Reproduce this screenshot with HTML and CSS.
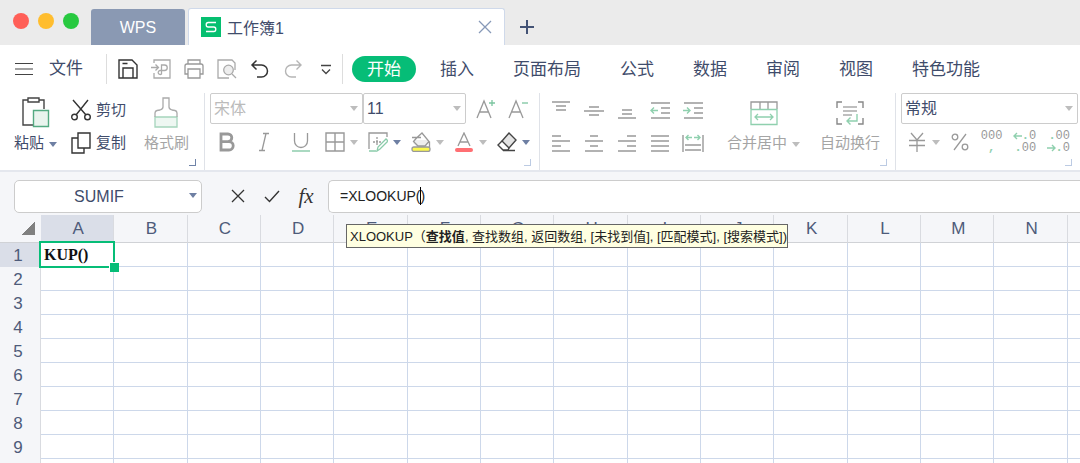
FILE: index.html
```
<!DOCTYPE html>
<html lang="zh-CN">

<head>
  <meta charset="UTF-8">
  <meta name="viewport" content="width=device-width, initial-scale=1.0">
  <title>工作簿1</title>
  <link rel="stylesheet" href="styles.css">
</head>

<body>
  <!-- 标题栏 -->
  <header class="titlebar">
    <div class="lights">
      <button class="light red" aria-label="关闭窗口"></button>
      <button class="light yellow" aria-label="最小化"></button>
      <button class="light green" aria-label="最大化"></button>
    </div>
    <button class="tab-home">WPS</button>
    <div class="tab-file">
      <svg class="logo" width="20" height="20" viewBox="0 0 20 20">
        <rect width="20" height="20" fill="#05bf70" />
        <path d="M15 5.500H7.200Q5.200 5.500 5.200 7.700T7.200 10h5.600q2 0 2 2.200t-2 2.300H5" fill="none" stroke="#fff" stroke-width="1.300" />
      </svg>
      <span class="tab-name">工作簿1</span>
      <button class="tab-close" aria-label="关闭">
        <svg width="14" height="14" viewBox="0 0 14 14"><path d="M1 1l12 12M13 1L1 13" stroke="#8799b8" stroke-width="1.300" /></svg>
      </button>
    </div>
    <button class="tab-add" aria-label="新建">
      <svg width="16" height="16" viewBox="0 0 16 16"><path d="M8 1v14M1 8h14" stroke="#435375" stroke-width="2" /></svg>
    </button>
  </header>

  <!-- 菜单栏 -->
  <nav class="menubar">
    <button class="menu-file">
      <svg width="18" height="14" viewBox="0 0 18 14"><path d="M0 1.500h18M0 7h18M0 12.500h18" stroke="#444" stroke-width="1.200" /></svg>
      <span>文件</span>
    </button>
    <div class="quick">
      <button aria-label="保存">
        <svg width="20" height="20" viewBox="0 0 20 20" fill="none" stroke="#333" stroke-width="1.400"><path d="M1 1h13l5 5v13H1zM5 19V9h10v10M4.500 4.500h5" /></svg>
      </button>
      <button aria-label="输出为PDF">
        <svg width="20" height="20" viewBox="0 0 20 20" fill="none" stroke="#aaa" stroke-width="1.300"><path d="M3 4V1h16v18H3v-5M0 8.500h7M4.500 5.500l3 3-3 3M10.500 13V6h3a2.700 2.700 0 0 1 0 5.500H9a2 2 0 1 0 1.500 3.500z" /></svg>
      </button>
      <button aria-label="打印">
        <svg width="20" height="20" viewBox="0 0 20 20" fill="none" stroke="#999" stroke-width="1.300"><path d="M4 5V1h12v4M4 15H1V7q0-2 2-2h14q2 0 2 2v8h-3M4 10h12v9H4z" /></svg>
      </button>
      <button aria-label="打印预览">
        <svg width="20" height="20" viewBox="0 0 20 20" fill="none" stroke="#aaa" stroke-width="1.300"><path d="M12 19H1V1h14l3 3v7" /><circle cx="11.500" cy="11" r="4.800" fill="#eee" /><path d="M15 15l4 4" /></svg>
      </button>
      <button aria-label="撤销">
        <svg width="20" height="20" viewBox="0 0 20 20" fill="none" stroke="#333" stroke-width="1.500"><path d="M6.500 1.500l-4.500 4.500 4.500 4.500M2 6h9.500a6 6 0 0 1 0 12H7" /></svg>
      </button>
      <button aria-label="恢复">
        <svg width="20" height="20" viewBox="0 0 20 20" fill="none" stroke="#b5b5b5" stroke-width="1.400"><path d="M13.500 1.500l4.500 4.500-4.500 4.500M18 6H8.500a6 6 0 0 0 0 12H13" /></svg>
      </button>
      <button aria-label="更多">
        <svg width="20" height="20" viewBox="0 0 20 20" fill="none" stroke="#444" stroke-width="1.300"><path d="M5 6.500h10M6 10.500l4 4 4-4" /></svg>
      </button>
    </div>
    <div class="menus">
      <a href="#" class="menu active">开始</a>
      <a href="#" class="menu">插入</a>
      <a href="#" class="menu">页面布局</a>
      <a href="#" class="menu">公式</a>
      <a href="#" class="menu">数据</a>
      <a href="#" class="menu">审阅</a>
      <a href="#" class="menu">视图</a>
      <a href="#" class="menu">特色功能</a>
    </div>
  </nav>

  <!-- 功能区 -->
  <section class="ribbon">
    <div class="group clipboard dark-corner">
      <button class="big">
        <svg width="28" height="32" viewBox="0 0 28 32" fill="none" stroke="#444" stroke-width="1.400"><path d="M6 3H1v25h10M17 3h5v9M6 1h11v4H6z" /><path d="M11.500 13.500h15v16h-15z" fill="#e9f4ee" stroke="#54aa82" /></svg>
        <span>粘贴<i class="arrow on"></i></span>
      </button>
      <div class="stack">
        <button class="small">
          <svg width="20" height="22" viewBox="0 0 20 22" fill="none" stroke="#333" stroke-width="1.400"><path d="M2 1l13 15M17 1L5 16" /><circle cx="3.500" cy="18" r="2.800" /><circle cx="16.500" cy="18" r="2.800" /></svg>
          <span>剪切</span>
        </button>
        <button class="small">
          <svg width="20" height="22" viewBox="0 0 20 22" fill="none" stroke="#333" stroke-width="1.400"><path d="M7 1h12v15H7zM7 6H1v15h12v-5" /></svg>
          <span>复制</span>
        </button>
      </div>
      <button class="big off">
        <svg width="28" height="32" viewBox="0 0 28 32" fill="none" stroke="#aaa" stroke-width="1.300"><path d="M3 20h22v10H3z" fill="#eef7f2" stroke="#a5d5bc" /><path d="M3 20v-4q0-2 2-2.500l3-.5q3-1 3-3V1h6v9q0 2 3 3l3 .5q2 .500 2 2.500v4" /></svg>
        <span>格式刷</span>
      </button>
    </div>

    <div class="group font">
      <div class="line">
        <div class="drop family off"><select aria-label="字体"><option>宋体</option></select></div>
        <div class="drop size"><select aria-label="字号"><option>11</option></select></div>
        <button class="tool grow" aria-label="增大字号">
          <svg width="22" height="22" viewBox="0 0 22 22" fill="none" stroke="#999" stroke-width="1.300"><path d="M2 20L9 3l7 17M4.500 14h9" /><path d="M14 5h6M17 2v6" stroke="#7cc5a0" /></svg>
        </button>
        <button class="tool grow" aria-label="减小字号">
          <svg width="22" height="22" viewBox="0 0 22 22" fill="none" stroke="#999" stroke-width="1.300"><path d="M2 20L9 3l7 17M4.500 14h9" /><path d="M15 5h6" stroke="#7cc5a0" /></svg>
        </button>
      </div>
      <div class="line spread">
        <button class="tool narrow" aria-label="加粗">
          <svg width="20" height="20" viewBox="0 0 20 20" fill="none" stroke="#999" stroke-width="2.800"><path d="M4 2h7a3.800 3.800 0 0 1 0 7.600H4zM4 9.600h8a4.200 4.200 0 0 1 0 8.400H4z" /></svg>
        </button>
        <button class="tool narrow" aria-label="倾斜">
          <svg width="20" height="20" viewBox="0 0 20 20" fill="none" stroke="#999" stroke-width="1.300"><path d="M9 1.500h6M5 18.500h6M12 1.500l-4 17" /></svg>
        </button>
        <button class="tool narrow" aria-label="下划线">
          <svg width="20" height="20" viewBox="0 0 20 20" fill="none" stroke="#999" stroke-width="1.300"><path d="M3.500 1v8a6.500 6.500 0 0 0 13 0V1" /><path d="M1 19h18" stroke="#7cc5a0" /></svg>
        </button>
        <button class="tool" aria-label="边框">
          <svg width="20" height="20" viewBox="0 0 20 20" fill="none" stroke="#999" stroke-width="1.400"><path d="M1 1h18v18H1zM10 1v18M1 10h18" /></svg><i class="arrow"></i>
        </button>
        <button class="tool" aria-label="绘制边框">
          <svg width="20" height="20" viewBox="0 0 20 20" fill="none" stroke="#999" stroke-width="1.300"><path d="M1 17V1h18v4" /><path d="M5 10h8M9 5v9" stroke-dasharray="2 1" /><path d="M1 19h7M9 19l1-4 8-8 2 2-8 8z" stroke="#8bcbaa" /></svg><i class="arrow on"></i>
        </button>
        <button class="tool" aria-label="填充颜色">
          <svg width="20" height="20" viewBox="0 0 20 20" fill="none" stroke="#999" stroke-width="1.300"><path d="M4 8h13l1 2-4 5H6l-4-4z" fill="#eee" stroke="none" /><path d="M1 5.500h9M6 5.500L2.500 9.500 7 14h7l4-4.500L11 1 6 5.500M18.500 9.500V15" /><rect x="1" y="15" width="18" height="4.500" rx="2" fill="#fbf94f" /></svg><i class="arrow"></i>
        </button>
        <button class="tool" aria-label="字体颜色">
          <svg width="20" height="20" viewBox="0 0 20 20" fill="none" stroke="#999" stroke-width="1.300"><path d="M4 14l6-13 6 13M6 10h8" /><rect x="1" y="16" width="18" height="4" rx="2" fill="#ff6f73" stroke="none" /></svg><i class="arrow"></i>
        </button>
        <button class="tool" aria-label="清除">
          <svg width="20" height="20" viewBox="0 0 20 20" fill="none" stroke="#444" stroke-width="1.400"><path d="M12 1l7 7-7 8-7-7z" fill="#e4e4e4" /><path d="M5 9l-4 4 5 5h5l1-2M6 18.500h12" /></svg><i class="arrow on"></i>
        </button>
      </div>
    </div>

    <div class="group align">
      <div class="icons">
        <button aria-label="顶端对齐"><svg width="20" height="20" viewBox="0 0 20 20" stroke="#999" stroke-width="1.400"><path d="M1 2h18M5 6h10M5 10h10" /></svg></button>
        <button aria-label="垂直居中"><svg width="20" height="20" viewBox="0 0 20 20" stroke="#999" stroke-width="1.400"><path d="M5 7h10M0 11h20M5 15h10" /></svg></button>
        <button aria-label="底端对齐"><svg width="20" height="20" viewBox="0 0 20 20" stroke="#999" stroke-width="1.400"><path d="M5 10h10M5 14h10M1 18h18" /></svg></button>
        <button aria-label="减少缩进"><svg width="20" height="20" viewBox="0 0 20 20" fill="none" stroke="#999" stroke-width="1.400"><path d="M1 3h19M11 8h9M11 13h9M1 18h19" /><path d="M8 10.500H1M4 7.500l-3 3 3 3" stroke="#8fd0ae" /></svg></button>
        <button aria-label="增加缩进"><svg width="20" height="20" viewBox="0 0 20 20" fill="none" stroke="#999" stroke-width="1.400"><path d="M1 3h19M11 8h9M11 13h9M1 18h19" /><path d="M0 10.500h7M4 7.500l3 3-3 3" stroke="#8fd0ae" /></svg></button>
        <button aria-label="左对齐"><svg width="20" height="20" viewBox="0 0 20 20" stroke="#999" stroke-width="1.400"><path d="M1 3h9M1 8h18M1 13h9M1 18h18" /></svg></button>
        <button aria-label="水平居中"><svg width="20" height="20" viewBox="0 0 20 20" stroke="#999" stroke-width="1.400"><path d="M6 3h8M1 8h18M6 13h8M1 18h18" /></svg></button>
        <button aria-label="右对齐"><svg width="20" height="20" viewBox="0 0 20 20" stroke="#999" stroke-width="1.400"><path d="M10 3h9M1 8h18M10 13h9M1 18h18" /></svg></button>
        <button aria-label="两端对齐"><svg width="20" height="20" viewBox="0 0 20 20" stroke="#999" stroke-width="1.400"><path d="M1 3h18M1 8h18M1 13h18M1 18h18" /></svg></button>
        <button aria-label="分散对齐"><svg width="22" height="20" viewBox="0 0 22 20" fill="none" stroke="#999" stroke-width="1.400"><path d="M1 2v17M21 2v17M3 12h16M3 17h16" /><path d="M10 4.500H4M6.500 2L4 4.500 6.500 7M12 4.500h6M15.500 2L18 4.500 15.500 7" stroke="#8fd0ae" /></svg></button>
      </div>
      <button class="big off">
        <svg width="28" height="32" viewBox="0 0 28 32" fill="none" stroke="#999" stroke-width="1.300"><path d="M1 12V5h26v7M10 5v7M18 5v7" /><path d="M1 12.500h26v15H1zM5 20h18M8 17l-3 3 3 3M20 17l3 3-3 3" stroke="#8fd0ae" /></svg>
        <span>合并居中<i class="arrow"></i></span>
      </button>
      <button class="big off">
        <svg width="28" height="32" viewBox="0 0 28 32" fill="none" stroke="#888" stroke-width="1.400"><path d="M6 5H1v6M22 5h5v6M6 27H1v-6M22 27h5v-6" /><path d="M7 10h14M7 14h14M7 18h9" stroke="#aaa" /><path d="M21 17v7H11M14.500 20.500L11 24l3.500 3.500" stroke="#8fd0ae" /></svg>
        <span>自动换行</span>
      </button>
    </div>

    <div class="group number">
      <div class="drop format"><select aria-label="数字格式"><option>常规</option></select></div>
      <div class="line">
        <button class="tool" aria-label="货币">
          <svg width="20" height="20" viewBox="0 0 20 20" fill="none" stroke="#999" stroke-width="1.300"><path d="M4 1l6 7 6-7M2 8.500h16M2 13.500h16M10 8v12" /></svg><i class="arrow"></i>
        </button>
        <button class="tool" aria-label="百分比">
          <svg width="20" height="20" viewBox="0 0 20 20" fill="none" stroke="#999" stroke-width="1.300"><circle cx="5" cy="5" r="2.800" /><circle cx="15" cy="15" r="2.800" /><path d="M16 2L4 18" /></svg>
        </button>
        <button class="digits"><span>000</span><span class="mint">,</span></button>
        <button class="digits right">
          <span><svg width="9" height="8" viewBox="0 0 9 8"><path d="M9 4H1M4 1L1 4l3 3" /></svg><b class="mint">.</b>0</span>
          <span><b class="mint">.</b>00</span>
        </button>
        <button class="digits right">
          <span><b class="mint">.</b>00</span>
          <span><svg width="9" height="8" viewBox="0 0 9 8"><path d="M0 4h8M5 1l3 3-3 3" /></svg><b class="mint">.</b>0</span>
        </button>
      </div>
    </div>
  </section>

  <!-- 编辑栏 -->
  <section class="formula">
    <div class="drop name-box"><select aria-label="名称框"><option>SUMIF</option></select></div>
    <div class="actions">
      <button aria-label="取消"><svg width="16" height="16" viewBox="0 0 16 16"><path d="M2 2l12 12M14 2L2 14" stroke="#333" stroke-width="1.300" /></svg></button>
      <button aria-label="输入"><svg width="16" height="16" viewBox="0 0 16 16" fill="none"><path d="M1 9l4.500 4.500L15 3" stroke="#333" stroke-width="1.400" /></svg></button>
      <button class="fx" aria-label="插入函数">fx</button>
    </div>
    <div class="input-wrap">
      <input type="text" class="input" aria-label="编辑栏" value="=XLOOKUP()">
      <span class="caret"></span>
      <div class="tip">XLOOKUP（<b>查找值</b>, 查找数组, 返回数组, [未找到值], [匹配模式], [搜索模式])</div>
    </div>
  </section>

  <!-- 表格 -->
  <table class="sheet">
    <colgroup>
      <col class="col-head">
      <col span="14">
      <col class="col-rest">
    </colgroup>
    <thead>
      <tr>
        <th class="all"></th>
        <th class="current">A</th><th>B</th><th>C</th><th>D</th><th>E</th><th>F</th><th>G</th><th>H</th><th>I</th><th>J</th><th>K</th><th>L</th><th>M</th><th>N</th><th></th>
      </tr>
    </thead>
    <tbody>
      <tr>
        <th class="current">1</th>
        <td class="selected">KUP()</td><td></td><td></td><td></td><td></td><td></td><td></td><td></td><td></td><td></td><td></td><td></td><td></td><td></td><td></td>
      </tr>
    </tbody>
  </table>

  <script>
    // 补齐第2~10行
    const body = document.querySelector(".sheet tbody");
    for (let i = 2; i <= 10; i++) {
      const tr = document.createElement("tr");
      tr.innerHTML = "<th>" + i + "</th>" + "<td></td>".repeat(15);
      body.appendChild(tr);
    }
  </script>
</body>

</html>
```
FILE: styles.css
```
* {
  box-sizing: border-box;
}

body {
  height: 100vh;
  margin: 0;
  overflow: hidden;
  background: #fff;
  color: #3f4c6b;
  font-family: "Liberation Sans", "Noto Sans CJK SC", sans-serif;
  font-size: 15px;
}

button {
  display: flex;
  align-items: center;
  justify-content: center;
  padding: 0;
  border: 0;
  background: none;
  color: inherit;
  font: inherit;
  white-space: nowrap;
}

svg {
  display: block;
  flex: none;
}

/* 标题栏 */
.titlebar {
  display: flex;
  align-items: flex-end;
  height: 45px;
  background: #ebebeb;
}

.lights {
  display: flex;
  gap: 9px;
  width: 91px;
  padding: 0 0 16px 13px;
}

.light {
  width: 16px;
  height: 16px;
  border-radius: 50%;
}

.red {
  background: #ff5f57;
}

.yellow {
  background: #ffbd2e;
}

.green {
  background: #28c940;
}

.tab-home {
  width: 94px;
  height: 36px;
  margin-right: 3px;
  padding-top: 2px;
  border-radius: 3px 3px 0 0;
  background: #8a99b3;
  color: #fff;
  font-size: 16px;
}

.tab-file {
  display: flex;
  align-items: center;
  width: 317px;
  height: 37px;
  padding: 0 12px;
  border: 1px solid #cfd9ea;
  border-bottom: 0;
  border-radius: 3px 3px 0 0;
  background: #fff;
}

.tab-name {
  margin: 0 auto 0 6px;
  font-size: 16px;
}

.tab-add {
  width: 44px;
  height: 36px;
}

/* 菜单栏 */
.menubar {
  display: flex;
  align-items: center;
  height: 48px;
  font-size: 17px;
}

.menu-file {
  gap: 16px;
  width: 107px;
  height: 30px;
  padding-right: 8px;
  border-right: 1px solid #ddd;
}

.menu-file span {
  line-height: 26px;
}

.quick {
  display: flex;
  width: 236px;
  height: 30px;
  padding-left: 5px;
  border-right: 1px solid #ddd;
}

.quick button {
  width: 33px;
}

.menus {
  display: flex;
  gap: 9px;
  padding-left: 9px;
}

.menu {
  height: 26px;
  padding: 0 15px;
  border-radius: 13px;
  color: #3f4c6b;
  line-height: 28px;
  text-decoration: none;
  white-space: nowrap;
}

.active {
  background: #06bd77;
  color: #fff;
}

/* 功能区 */
.ribbon {
  display: flex;
  height: 79px;
  border-bottom: 2px solid #e4e7ee;
}

.group {
  position: relative;
  flex: none;
  height: 77px;
  border-right: 1px solid #dfe2e8;
}

.group::after {
  content: "";
  position: absolute;
  right: 8px;
  bottom: 4px;
  width: 6px;
  height: 6px;
  border-right: 1px solid #bccbe3;
  border-bottom: 1px solid #bccbe3;
}

.dark-corner::after {
  border-color: #6f83a8;
}

.off {
  color: #a5a5a5;
}

.arrow {
  display: inline-block;
  flex: none;
  width: 0;
  height: 0;
  margin-left: 5px;
  border: 4px solid transparent;
  border-top: 5px solid #bdbdbd;
  border-bottom: 0;
  vertical-align: middle;
}

.on {
  border-top-color: #6e7fa3;
}

.big {
  flex-direction: column;
  gap: 2px;
  height: 62px;
  padding-top: 4px;
}

.big span {
  line-height: 24px;
}

.clipboard {
  display: flex;
  width: 205px;
  padding: 0 15px 0 14px;
}

.stack {
  margin: 0 auto 0 14px;
}

.small {
  gap: 5px;
  height: 33px;
}

.small span {
  line-height: 22px;
}

.line {
  display: flex;
  align-items: center;
}

.drop {
  position: relative;
  height: 31px;
}

.drop::after {
  content: "";
  position: absolute;
  top: 13px;
  right: 5px;
  border: 4px solid transparent;
  border-top: 5px solid #bdbdbd;
  border-bottom: 0;
  pointer-events: none;
}

.drop select {
  width: 100%;
  height: 100%;
  padding: 0 3px;
  border: 1px solid #ccc;
  border-radius: 2px;
  appearance: none;
  background: #fff;
  color: #3f4c6b;
  font: inherit;
  font-size: 16px;
}

.family {
  width: 153px;
}

.size {
  width: 103px;
}

.family select {
  color: #bbb;
}

.font {
  width: 335px;
  padding: 0 5px;
}

.grow {
  width: 32px;
  margin-left: 4px;
  margin-right: -4px;
}

.spread {
  height: 36px;
  gap: 3px;
}

.tool {
  height: 30px;
}

.spread .tool {
  width: 40px;
}

.spread .narrow {
  width: 34px;
}

.align {
  display: flex;
  width: 356px;
  padding: 0 15px 0 4px;
}

.icons {
  display: grid;
  grid-template-columns: repeat(5, 33px);
  grid-auto-rows: 33px;
  margin-right: 18px;
}

.align .big + .big {
  margin-left: auto;
}

.number {
  flex: 1;
  min-width: 180px;
  padding: 0 2px 0 5px;
  border-right: 0;
}

.number .line {
  justify-content: space-between;
  height: 36px;
  padding: 0 8px 0 6px;
}

.digits {
  flex-direction: column;
  color: #999;
  font-family: "Liberation Mono", monospace;
  font-size: 12px;
  line-height: 12px;
}

.digits span {
  display: flex;
  align-items: center;
}

.digits path {
  fill: none;
  stroke: #8fd0ae;
  stroke-width: 1.4;
}

.right {
  align-items: flex-end;
}

.mint {
  color: #8fd0ae;
  font-weight: bold;
}

/* 编辑栏 */
.formula {
  display: flex;
  align-items: center;
  height: 43px;
  padding: 5px 0 0 14px;
  background: #f5f6f9;
}

.name-box {
  width: 188px;
  height: 33px;
}

.name-box::after {
  border-top-color: #6e7fa3;
}

.name-box select {
  padding: 0 18px 0 0;
  border-radius: 5px;
  text-align: center;
  text-align-last: center;
}

.actions {
  display: flex;
  width: 126px;
  padding-left: 19px;
}

.actions button {
  width: 34px;
}

.fx {
  color: #333;
  font: italic 21px "Liberation Serif", serif;
}

.input-wrap {
  position: relative;
  flex: 1;
}

.input {
  display: block;
  width: 100%;
  height: 33px;
  padding: 0 11px;
  border: 1px solid #ccc;
  border-right: 0;
  border-radius: 5px 0 0 5px;
  background: #fff;
  color: #222;
  font: inherit;
  font-size: 14px;
}

.caret {
  position: absolute;
  top: 7px;
  left: 92px;
  width: 1px;
  height: 18px;
  background: #000;
}

.tip {
  position: absolute;
  z-index: 1;
  top: 44px;
  left: 18px;
  height: 24px;
  padding: 0 0 0 3px;
  border: 1px solid #666;
  background: #ffffe1;
  color: #222;
  font-size: 13px;
  line-height: 23px;
  white-space: nowrap;
}

/* 表格 */
.sheet {
  width: 100%;
  border-collapse: separate;
  border-spacing: 0;
  table-layout: fixed;
}

.col-head {
  width: 41px;
}

.col-rest {
  width: 12px;
}

.sheet th {
  height: 24px;
  padding: 0;
  border-right: 1px solid #d9dbe0;
  background: #f5f6f9;
  color: #4e5b7a;
  font-size: 17px;
  font-weight: normal;
  line-height: 23px;
}

.sheet thead th {
  height: 28px;
  padding-left: 2px;
  border-bottom: 1px solid #d0d2d6;
}

.sheet tbody th {
  padding-right: 4px;
}

.sheet .current {
  background: #dadee8;
}

.sheet .all {
  border-right: 0;
  background: linear-gradient(135deg, transparent 50%, #808080 50%) 21px 7px / 14px 13px no-repeat #f5f6f9;
}

.sheet td {
  height: 24px;
  padding: 0;
  border-right: 1px solid #cdd8ea;
  border-bottom: 1px solid #cdd8ea;
}

.sheet tr > :last-child {
  border-right: 0;
}

.sheet .selected {
  position: relative;
  padding-left: 3px;
  color: #111;
  font: bold 16px/20px "Liberation Serif", serif;
}

.selected::before {
  content: "";
  position: absolute;
  inset: -2px;
  border: 2px solid #06bd77;
}

.selected::after {
  content: "";
  position: absolute;
  right: -6px;
  bottom: -6px;
  width: 9px;
  height: 9px;
  border: 1px solid #fff;
  border-width: 1px 0 0 1px;
  background: #06bd77;
}
```
